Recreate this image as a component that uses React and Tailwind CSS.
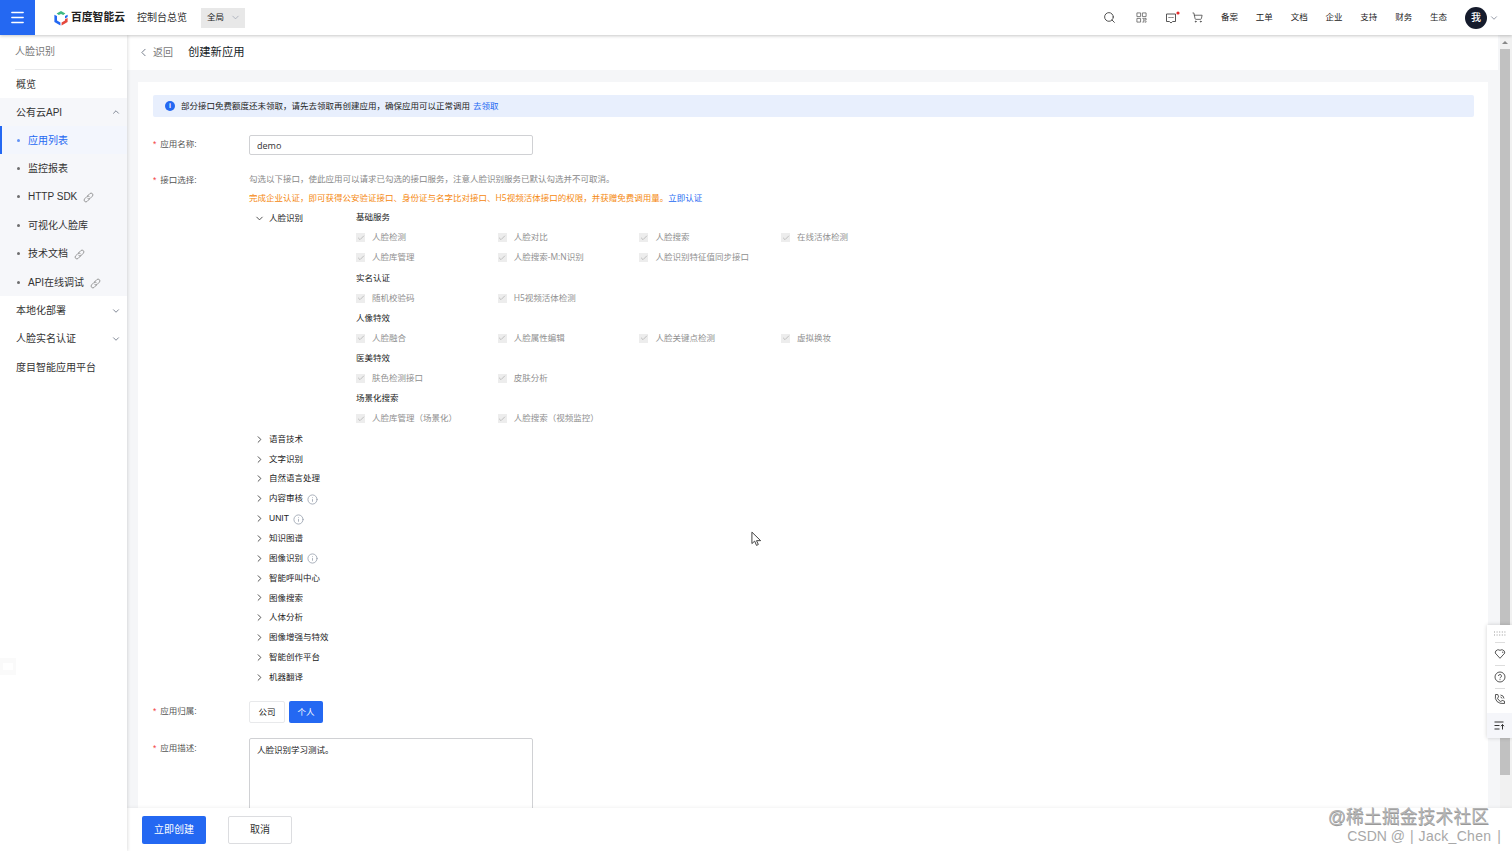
import { useState } from "react";
import { Search, ShoppingCart, ChevronDown, ChevronUp, ChevronRight, ChevronLeft, Menu, Check, Info } from "lucide-react";

const navLinks = ["备案", "工单", "文档", "企业", "支持", "财务", "生态"];

const apiMenu = [
  { label: "应用列表", active: true },
  { label: "监控报表" },
  { label: "HTTP SDK", link: true },
  { label: "可视化人脸库" },
  { label: "技术文档", link: true },
  { label: "API在线调试", link: true },
];

const faceGroups = [
  {
    title: "基础服务",
    rows: [
      ["人脸检测", "人脸对比", "人脸搜索", "在线活体检测"],
      ["人脸库管理", "人脸搜索-M:N识别", "人脸识别特征值同步接口"],
    ],
  },
  { title: "实名认证", rows: [["随机校验码", "H5视频活体检测"]] },
  { title: "人像特效", rows: [["人脸融合", "人脸属性编辑", "人脸关键点检测", "虚拟换妆"]] },
  { title: "医美特效", rows: [["肤色检测接口", "皮肤分析"]] },
  { title: "场景化搜索", rows: [["人脸库管理（场景化）", "人脸搜索（视频监控）"]] },
];

const categories = [
  { name: "语音技术" },
  { name: "文字识别" },
  { name: "自然语言处理" },
  { name: "内容审核", info: true },
  { name: "UNIT", info: true },
  { name: "知识图谱" },
  { name: "图像识别", info: true },
  { name: "智能呼叫中心" },
  { name: "图像搜索" },
  { name: "人体分析" },
  { name: "图像增强与特效" },
  { name: "智能创作平台" },
  { name: "机器翻译" },
];

const LinkIcon = () => (
  <svg viewBox="0 0 12 12" className="ml-[6px] mt-[2px] h-[11px] w-[11px] shrink-0" fill="none" stroke="#777" strokeWidth="0.8" strokeLinecap="round">
    <path d="M5 4.2 7.4 1.8a1.9 1.9 0 0 1 2.8 2.8L7.8 7a1.9 1.9 0 0 1-2.6.1" />
    <path d="M7 7.8 4.6 10.2a1.9 1.9 0 0 1-2.8-2.8L4.2 5a1.9 1.9 0 0 1 2.6-.1" />
  </svg>
);

const Header = () => (
  <header className="relative z-20 flex h-[35px] shrink-0 items-center bg-white shadow-[0_1px_3px_rgba(0,0,0,0.22)]">
    <button className="flex h-[35px] w-[35px] items-center justify-center bg-[#2468f2] text-white">
      <Menu size={17} strokeWidth={2} />
    </button>
    <svg viewBox="0 0 14 16" className="ml-[19px] h-[16px] w-[14px]">
      <path d="M2.600 3.600 7 .9l4.400 2.700-2.200 1.500L7 3.900 4.800 5.100z" fill="#3fb883" />
      <path d="M.4 4.700 3 6.100v4.400l3.400 2v2.900L.4 12z" fill="#2468f2" />
      <path d="M13.600 8v4l-6 3.400v-2.900L11 10.500V9.300z" fill="#e5483d" />
      <path d="M13.600 4.700 11 6.100v2.300l2.600-1.300z" fill="#2468f2" />
    </svg>
    <span className="ml-[3px] text-[10.8px] font-bold text-[#222]">百度智能云</span>
    <span className="ml-[12px] text-[10px] text-[#333]">控制台总览</span>
    <div className="ml-[14px] flex h-[20px] w-[44px] items-center justify-between bg-[#e8e8e8] pr-[4px] pl-[6px] text-[8.5px] text-[#222]">
      全局
      <ChevronDown size={11} strokeWidth={1.5} className="text-gray-400" />
    </div>
    <div className="ml-auto flex items-center text-[#444]">
      <Search size={13} strokeWidth={1.7} />
      <svg viewBox="0 0 12 12" className="ml-[20px] h-[11px] w-[11px]" fill="none" stroke="#666" strokeWidth="0.9">
        <path d="M1 1h4v4H1zM7 1h4v4H7zM1 7h4v4H1zM7 7h1.5v4H7M9 7h2v1.8H9M9.5 11H11v-1" />
      </svg>
      <svg viewBox="0 0 16 14" className="ml-[18px] h-[14px] w-[16px]" fill="none" stroke="currentColor" strokeWidth="0.9">
        <path d="M1.5 3h9v7.5H7.6L6 12l-1.600-1.500H1.500z" />
        <path d="M3.500 6.500h5" strokeDasharray="1.200 0.700" />
        <circle cx="13" cy="2" r="1.600" fill="#e62c2c" stroke="none" />
      </svg>
      <ShoppingCart size={11} strokeWidth={1.7} className="ml-[11px]" />
      <nav className="ml-[18px] flex w-[226px] justify-between text-[8.500px] text-[#222]">
        {navLinks.map((n) => (
          <a key={n}>{n}</a>
        ))}
      </nav>
      <span className="ml-[18px] flex h-[22px] w-[22px] items-center justify-center rounded-full bg-[#151b2c] text-[10px] font-medium text-white">我</span>
      <ChevronDown size={10} strokeWidth={1.700} className="mr-[13px] ml-[2px] text-gray-500" />
    </div>
  </header>
);

const Sidebar = () => (
  <aside className="relative z-10 flex w-[127px] shrink-0 flex-col bg-white text-[10px] text-[#333] shadow-[1px_0_3px_rgba(0,0,0,0.12)]">
    <div className="mx-[15px] flex h-[35px] items-center border-b border-[#e8e9eb] pb-[2px] text-[#777]">人脸识别</div>
    <div className="flex h-[28px] items-center pl-[16px]">概览</div>
    <div className="bg-[#f6f7fa]">
      <div className="flex h-[28px] items-center justify-between pr-[6px] pl-[16px]">
        公有云API
        <ChevronUp size={10} strokeWidth={2} className="text-gray-500" />
      </div>
      {apiMenu.map((m) => (
        <div
          key={m.label}
          className={
            m.active
              ? "flex h-[28.400px] items-center border-l-2 border-[#2468f2] bg-[#f3f6fd] pl-[15px] text-[#2468f2]"
              : "flex h-[28.400px] items-center pl-[17px]"
          }
        >
          <span className="mr-[8px] h-[3px] w-[3px] shrink-0 rounded-full bg-current opacity-70" />
          {m.label}
          {m.link && <LinkIcon />}
        </div>
      ))}
    </div>
    {["本地化部署", "人脸实名认证"].map((t) => (
      <div key={t} className="flex h-[28.400px] items-center justify-between pr-[6px] pl-[16px]">
        {t}
        <ChevronDown size={10} strokeWidth={2} className="text-gray-500" />
      </div>
    ))}
    <div className="flex h-[28.400px] items-center pl-[16px]">度目智能应用平台</div>
    <div className="mt-[276px] flex h-[17px] w-[16px] items-center justify-center bg-[#fafafa]">
      <span className="h-[7px] w-[10px] bg-white" />
    </div>
  </aside>
);

const Label = ({ children }) => (
  <div className="w-[96px] shrink-0 text-[8.500px] leading-[18px] text-[#555]">
    <span className="mr-[4px] text-[#f33e3e]">*</span>
    {children}:
  </div>
);

const CheckItem = ({ children }) => (
  <label className="flex w-[141.700px] items-center whitespace-nowrap text-[#8f8f8f]">
    <span className="mr-[7px] flex h-[9px] w-[9px] shrink-0 items-center justify-center bg-[#ededed] text-[#b0b0b0]">
      <Check size={8} strokeWidth={2.200} />
    </span>
    {children}
  </label>
);

const FloatTools = () => (
  <div className="absolute top-[625px] right-0 z-30 flex h-[113px] w-[25px] flex-col items-center bg-white text-[#444] shadow-[0_0_4px_rgba(0,0,0,0.18)]">
    <svg viewBox="0 0 12 5" className="mt-[6px] h-[5px] w-[12px]" stroke="#999" strokeDasharray="1 1.600">
      <path d="M0 1h12M0 4h12" />
    </svg>
    <span className="mt-[6px] h-px w-[10px] bg-[#ddd]" />
    <svg viewBox="0 0 12 12" className="mt-[5px] h-[12px] w-[12px]" fill="none" stroke="currentColor" strokeWidth="0.900" strokeLinejoin="round">
      <path d="M3.600 1.800Q5 1.600 6 2.400q1-.8 2.400-.6 2.400.6 2.400 3.200L6 10.300 1.200 5q0-2.600 2.400-3.200z" />
      <path d="M8 3.800q1 .3 1 1.200" />
    </svg>
    <span className="mt-[5px] h-px w-[10px] bg-[#ddd]" />
    <svg viewBox="0 0 12 12" className="mt-[5px] h-[12px] w-[12px]" fill="none" stroke="currentColor" strokeWidth="0.900">
      <circle cx="6" cy="6" r="5" />
      <path d="M4.500 5a1.500 1.500 0 1 1 2 1.400Q6 6.600 6 7.300M6 8.200v.9" />
    </svg>
    <span className="mt-[5px] h-px w-[10px] bg-[#ddd]" />
    <svg viewBox="0 0 12 12" className="mt-[4px] h-[12px] w-[12px]" fill="none" stroke="currentColor" strokeWidth="0.900" strokeLinejoin="round">
      <path d="M1.500 1.500h2.300l.8 2.400-1.200 1.300Q4.500 7.500 6.800 8.600L8.100 7.400l2.400.8v2.300Q5.500 11 3 8.500T1.500 1.500z" />
      <path d="M6.500 4q1.300.2 1.500 1.500M6.500 2q3.200.3 3.500 3.500" />
    </svg>
    <div className="mt-auto flex h-[25px] w-full items-center justify-center bg-[#f5f6fa]">
      <svg viewBox="0 0 11 9" className="h-[9px] w-[11px]" fill="none" stroke="#333">
        <path d="M.5 1h9M.5 4.500h5M.5 8h5M8.500 8.500V3.500M7 5.200l1.500-1.700L10 5.200" />
      </svg>
    </div>
  </div>
);

export default function App() {
  const [name, setName] = useState("demo");
  const [desc, setDesc] = useState("人脸识别学习测试。");

  return (
    <div className="relative flex h-[851px] w-[1512px] flex-col overflow-hidden bg-[#f5f6f8] font-['Liberation_Sans','Noto_Sans_CJK_SC',sans-serif] text-[#222]">
      <Header />
      <div className="flex min-h-0 flex-1">
        <Sidebar />
        <div className="flex min-w-0 flex-1 flex-col">
          <div className="flex min-h-0 flex-1">
            <main className="flex min-w-0 flex-1 flex-col">
              <div className="mr-[2px] flex h-[35px] shrink-0 items-center bg-white pl-[10px]">
                <ChevronLeft size={13} strokeWidth={1.700} className="text-gray-500" />
                <span className="ml-[3px] text-[10px] text-[#777]">返回</span>
                <span className="ml-[15px] text-[11.300px] text-[#151b26]">创建新应用</span>
              </div>

              <div className="mt-[12px] mr-[12px] ml-[11px] flex min-h-0 flex-1 flex-col overflow-hidden bg-white pt-[13px] pr-[14px] pl-[15px] text-[8.500px]">
                <div className="flex h-[22px] shrink-0 items-center rounded-[2px] bg-[#e8effd] pl-[12px]">
                  <span className="mr-[6px] flex h-[10px] w-[10px] items-center justify-center rounded-full bg-[#2468f2] text-[7px] font-bold text-white">i</span>
                  部分接口免费额度还未领取，请先去领取再创建应用，确保应用可以正常调用
                  <a className="ml-[3px] text-[#2468f2]">去领取</a>
                </div>

                <div className="mt-[18px] flex h-[35px] shrink-0">
                  <Label>应用名称</Label>
                  <input
                    value={name}
                    onChange={(e) => setName(e.target.value)}
                    className="h-[20px] w-[284px] rounded-[2px] border border-[#d0d1d4] px-[7px] font-['Open_Sans'] text-[9px] text-[#333] outline-none"
                  />
                </div>

                <div className="flex shrink-0">
                  <div className="pt-[1px]">
                    <Label>接口选择</Label>
                  </div>
                  <div className="font-['Open_Sans','Noto_Sans_CJK_SC',sans-serif]">
                    <p className="h-[19px] leading-[18px] text-[#888]">勾选以下接口，使此应用可以请求已勾选的接口服务，注意人脸识别服务已默认勾选并不可取消。</p>
                    <p className="h-[19px] leading-[18px] text-[#f5880f]">
                      完成企业认证，即可获得公安验证接口、身份证与名字比对接口、H5视频活体接口的权限，并获赠免费调用量。
                      <a className="text-[#2468f2]">立即认证</a>
                    </p>
                    <div className="flex">
                      <div className="flex h-[20px] w-[107px] items-center pl-[5px]">
                        <ChevronDown size={11} strokeWidth={2} className="mr-[4px] text-[#444]" />
                        人脸识别
                      </div>
                      <div>
                        {faceGroups.map((g) => (
                          <div key={g.title} className="mb-[0.500px]">
                            <div className="flex h-[19.400px] items-center">{g.title}</div>
                            {g.rows.map((row) => (
                              <div key={row[0]} className="flex h-[20.300px] items-center">
                                {row.map((item) => (
                                  <CheckItem key={item}>{item}</CheckItem>
                                ))}
                              </div>
                            ))}
                          </div>
                        ))}
                      </div>
                    </div>
                    {categories.map((c) => (
                      <div key={c.name} className="flex h-[19.850px] items-center pl-[5px] font-['Liberation_Sans','Noto_Sans_CJK_SC',sans-serif]">
                        <ChevronRight size={11} strokeWidth={2} className="mr-[4px] text-[#444]" />
                        {c.name}
                        {c.info && <Info size={11} strokeWidth={1.800} className="mt-px ml-[4px] text-gray-400" />}
                      </div>
                    ))}
                  </div>
                </div>

                <div className="mt-[14px] flex h-[37px] shrink-0">
                  <div className="pt-[1px]">
                    <Label>应用归属</Label>
                  </div>
                  <button className="h-[22px] w-[36px] rounded-[2px] border border-[#e8e9eb]">公司</button>
                  <button className="ml-[4px] h-[22px] w-[34px] rounded-[2px] bg-[#2468f2] text-white">个人</button>
                </div>

                <div className="flex shrink-0">
                  <div className="pt-[1px]">
                    <Label>应用描述</Label>
                  </div>
                  <textarea
                    value={desc}
                    onChange={(e) => setDesc(e.target.value)}
                    className="h-[90px] w-[284px] resize-none rounded-[2px] border border-[#d0d1d4] px-[7px] py-[4px] leading-[14px] outline-none"
                  />
                </div>
              </div>
            </main>
            <div className="flex w-[12px] flex-col items-center bg-[#f1f1f1] pt-[4px] pr-[2px]">
              <span className="mt-[2px] h-0 w-0 border-x-[3px] border-b-[3px] border-x-transparent border-b-[#888]" />
              <span className="mt-[5px] h-[726px] w-[10px] bg-[#c1c1c1]" />
            </div>
          </div>

          <footer className="flex h-[43px] shrink-0 items-center bg-white pl-[15px] text-[10px] shadow-[0_-1px_3px_rgba(0,0,0,0.05)]">
            <button className="h-[28px] w-[64px] rounded-[2px] bg-[#2468f2] text-white">立即创建</button>
            <button className="ml-[22px] h-[28px] w-[64px] rounded-[2px] border border-[#dcdde0] text-[#333]">取消</button>
          </footer>
        </div>
      </div>

      <FloatTools />

      <svg viewBox="0 0 12 17" className="absolute top-[531px] left-[751px] h-[16px] w-[11px]" fill="#fff" stroke="#333">
        <path d="M1 1v12.500l3-2.700L6 15.500l2-1-2-4.200h4.500z" />
      </svg>

      <div className="absolute right-[11px] bottom-[6px] z-30 flex flex-col items-end whitespace-nowrap">
        <div className="mr-[12px] text-[17.900px] leading-[20px] text-[#b4b4b4] [text-shadow:0.500px_0.500px_0.500px_#999]">@稀土掘金技术社区</div>
        <div className="flex text-[14px] leading-[18px] text-[#a8a8a8]">
          CSDN @<span className="mx-[5px]">|</span>
          <span className="tracking-[0.300px]">Jack_Chen</span>
          <span className="ml-[6px]">|</span>
        </div>
      </div>
    </div>
  );
}
